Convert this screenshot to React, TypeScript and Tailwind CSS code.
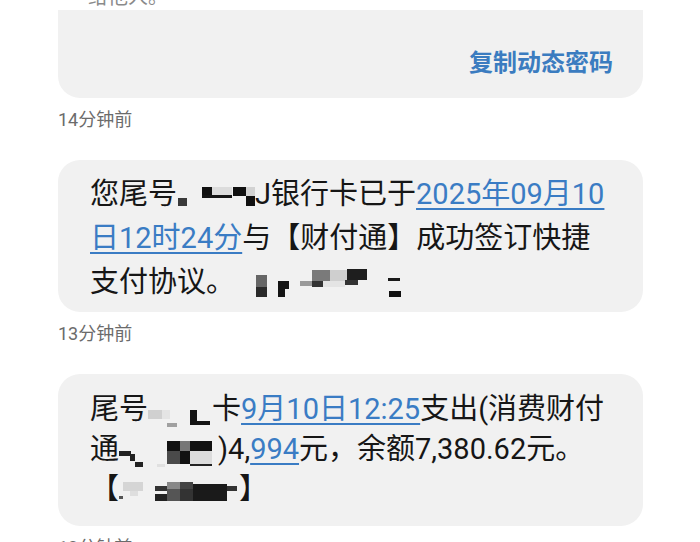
import React from 'react';

type Block = { x: number; y: number; w: number; h: number; c: string };

// pixelated redaction mosaic, coordinates relative to the line box
function Mosaic({ width, height, blocks }: { width: number; height: number; blocks: Block[] }) {
  return (
    <svg width={width} height={height} viewBox={`0 0 ${width} ${height}`} className="shrink-0 block">
      {blocks.map((b, i) => (
        <rect key={i} x={b.x} y={b.y} width={b.w} height={b.h} fill={b.c} />
      ))}
    </svg>
  );
}

const mosaicCardA: Block[] = [
  { x: 1, y: 25, w: 9, h: 8, c: '#3a3a3a' },
  { x: 25, y: 14, w: 10, h: 9, c: '#111111' },
  { x: 35, y: 14, w: 20, h: 8, c: '#dcdcdc' },
  { x: 25, y: 22, w: 30, h: 3, c: '#151515' },
  { x: 56, y: 14, w: 13, h: 9, c: '#111111' },
  { x: 69, y: 14, w: 9, h: 9, c: '#d2d2d2' },
  { x: 69, y: 23, w: 9, h: 10, c: '#111111' },
];

const mosaicNameA: Block[] = [
  { x: 21, y: 14, w: 11, h: 12, c: '#666666' },
  { x: 21, y: 26, w: 11, h: 10, c: '#2a2a2a' },
  { x: 43, y: 20, w: 11, h: 16, c: '#141414' },
  { x: 50, y: 28, w: 4, h: 8, c: '#f1f1f1' },
  { x: 65, y: 20, w: 12, h: 5, c: '#9a9a9a' },
  { x: 77, y: 9, w: 18, h: 11, c: '#7a7a7a' },
  { x: 77, y: 20, w: 11, h: 6, c: '#333333' },
  { x: 95, y: 9, w: 17, h: 11, c: '#cfcfcf' },
  { x: 88, y: 20, w: 22, h: 6, c: '#e4e4e4' },
  { x: 112, y: 8, w: 20, h: 11, c: '#1e1e1e' },
  { x: 110, y: 19, w: 13, h: 5, c: '#333333' },
  { x: 153, y: 17, w: 12, h: 3, c: '#1a1a1a' },
  { x: 154, y: 30, w: 12, h: 6, c: '#111111' },
];

const mosaicCardB: Block[] = [
  { x: 0, y: 20, w: 14, h: 9, c: '#d0d0d0' },
  { x: 14, y: 20, w: 8, h: 9, c: '#e4e4e4' },
  { x: 19, y: 33, w: 10, h: 4, c: '#a0a0a0' },
  { x: 42, y: 20, w: 7, h: 15, c: '#141414' },
  { x: 49, y: 31, w: 13, h: 4, c: '#141414' },
];

const mosaicMerchant: Block[] = [
  { x: 0, y: 21, w: 12, h: 5, c: '#222222' },
  { x: 11, y: 24, w: 5, h: 7, c: '#222222' },
  { x: 16, y: 32, w: 8, h: 5, c: '#222222' },
  { x: 38, y: 34, w: 8, h: 3, c: '#e0e0e0' },
  { x: 48, y: 11, w: 13, h: 10, c: '#111111' },
  { x: 48, y: 21, w: 13, h: 13, c: '#4a4a4a' },
  { x: 61, y: 11, w: 10, h: 10, c: '#777777' },
  { x: 61, y: 21, w: 10, h: 13, c: '#111111' },
  { x: 71, y: 11, w: 22, h: 10, c: '#111111' },
  { x: 71, y: 21, w: 22, h: 13, c: '#dcdcdc' },
  { x: 71, y: 34, w: 22, h: 2, c: '#222222' },
];

const mosaicSign: Block[] = [
  { x: 0, y: 26, w: 4, h: 3, c: '#555555' },
  { x: 4, y: 12, w: 20, h: 9, c: '#d5d5d5' },
  { x: 11, y: 21, w: 8, h: 5, c: '#dedede' },
  { x: 36, y: 16, w: 12, h: 5, c: '#333333' },
  { x: 36, y: 24, w: 12, h: 7, c: '#222222' },
  { x: 48, y: 12, w: 13, h: 7, c: '#888888' },
  { x: 48, y: 19, w: 13, h: 12, c: '#555555' },
  { x: 61, y: 12, w: 13, h: 7, c: '#444444' },
  { x: 61, y: 19, w: 13, h: 12, c: '#333333' },
  { x: 74, y: 14, w: 34, h: 17, c: '#1a1a1a' },
  { x: 108, y: 16, w: 10, h: 5, c: '#333333' },
];

function Link({ children }: { children: React.ReactNode }) {
  return (
    <span className="text-[#3a7cc4] underline decoration-[1.5px] underline-offset-[4px]">{children}</span>
  );
}

function Stamp({ text }: { text: string }) {
  return (
    <div className="pt-[10px] pb-[28px] h-[62px] text-[18px] leading-[24px] text-[#6b6b6b]">{text}</div>
  );
}

export default function App() {
  const font = { fontFamily: 'Roboto, "Noto Sans CJK SC", sans-serif' };
  return (
    <div className="w-[700px] h-[542px] overflow-hidden bg-white" style={font}>
      {/* clipped tail of the previous message */}
      <div className="h-[10px] overflow-hidden pl-[88px]">
        <div className="-mt-[15px] text-[20px] leading-[24px] text-[#8a8a8a]">给他人。</div>
      </div>

      <div className="pl-[58px] pr-[57px]">
        <div className="bg-[#f1f1f1] rounded-b-[22px] h-[88px] pt-[38px] pr-[30px] flex justify-end">
          <span className="text-[24px] leading-[30px] font-semibold text-[#3b7cc0]">复制动态密码</span>
        </div>
        <Stamp text="14分钟前" />

        <div className="bg-[#f1f1f1] rounded-[22px] h-[152px] pt-[13px] pl-[32px] text-[29px] text-[#161616]">
          <div className="flex items-center h-[44px] whitespace-nowrap">
            <span>您尾号</span>
            <Mosaic width={78} height={44} blocks={mosaicCardA} />
            <span>J银行卡已于</span>
            <Link>2025年09月10</Link>
          </div>
          <div className="flex items-center h-[44px] whitespace-nowrap">
            <Link>日12时24分</Link>
            <span>与【财付通】成功签订快捷</span>
          </div>
          <div className="flex items-center h-[44px] whitespace-nowrap">
            <span>支付协议。</span>
            <Mosaic width={170} height={44} blocks={mosaicNameA} />
          </div>
        </div>
        <Stamp text="13分钟前" />

        <div className="bg-[#f1f1f1] rounded-[22px] h-[152px] pt-[16px] pl-[32px] text-[29px] text-[#161616]">
          <div className="flex items-center h-[40px] whitespace-nowrap">
            <span>尾号</span>
            <Mosaic width={64} height={40} blocks={mosaicCardB} />
            <span>卡</span>
            <Link>9月10日12:25</Link>
            <span>支出(消费财付</span>
          </div>
          <div className="flex items-center h-[40px] whitespace-nowrap">
            <span>通</span>
            <Mosaic width={99} height={40} blocks={mosaicMerchant} />
            <span>)4,</span>
            <Link>994</Link>
            <span>元，余额7,380.62元。</span>
          </div>
          <div className="flex items-center h-[40px] whitespace-nowrap">
            <span>【</span>
            <Mosaic width={120} height={40} blocks={mosaicSign} />
            <span>】</span>
          </div>
        </div>
        <Stamp text="12分钟前" />
      </div>
    </div>
  );
}
